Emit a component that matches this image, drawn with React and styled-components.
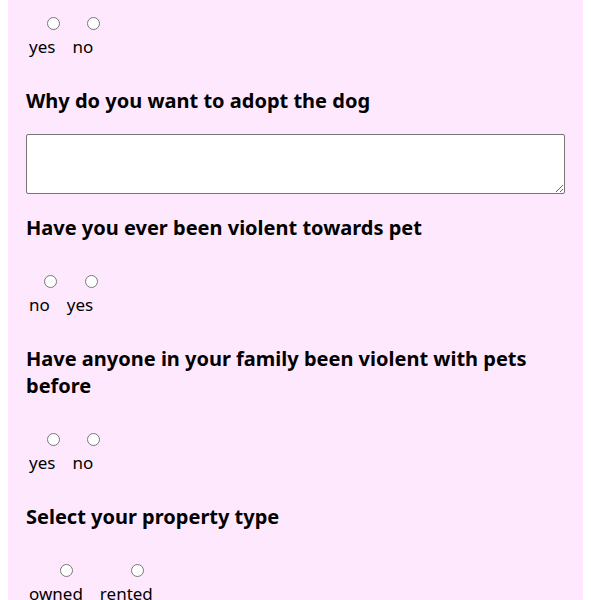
import styled, { createGlobalStyle } from "styled-components";

const Global = createGlobalStyle`
  body {
    margin: 0 8px;
    background: #ffffff;
    font-family: "Noto Sans", "Open Sans", sans-serif;
    color: #000000;
  }
`;

const Panel = styled.form`
  background: #fee8fe;
  padding: 0 18px 40px 18px;
  min-height: 700px;
`;

const Question = styled.h3`
  font-size: 20px;
  font-weight: 700;
  margin: 20px 0;
  line-height: normal;
`;

const Options = styled.div`
  display: flex;
  gap: 17px;
  padding: ${(p) => (p.$first ? "14px" : "11px")} 0 9px 3px;
`;

const Option = styled.label`
  display: flex;
  flex-direction: column;
  align-items: center;
  font-size: 17px;
  line-height: normal;
`;

const Radio = styled.input`
  margin: 3px -11px 5px 11px;
`;

const Answer = styled.textarea`
  display: block;
  box-sizing: border-box;
  width: 100%;
  height: 60px;
  margin: 0;
  border: 1px solid #767676;
  border-radius: 2px;
  background: #ffffff;
`;

function RadioGroup({ name, choices, first }) {
  return (
    <Options $first={first}>
      {choices.map((c) => (
        <Option key={c}>
          <Radio type="radio" name={name} value={c} />
          {c}
        </Option>
      ))}
    </Options>
  );
}

export default function App() {
  return (
    <>
      <Global />
      <Panel>
        <RadioGroup name="otherpets" choices={["yes", "no"]} first />
        <Question>Why do you want to adopt the dog</Question>
        <Answer name="reason" />
        <Question>Have you ever been violent towards pet</Question>
        <RadioGroup name="violent" choices={["no", "yes"]} />
        <Question>Have anyone in your family been violent with pets before</Question>
        <RadioGroup name="family" choices={["yes", "no"]} />
        <Question>Select your property type</Question>
        <RadioGroup name="property" choices={["owned", "rented"]} />
      </Panel>
    </>
  );
}
